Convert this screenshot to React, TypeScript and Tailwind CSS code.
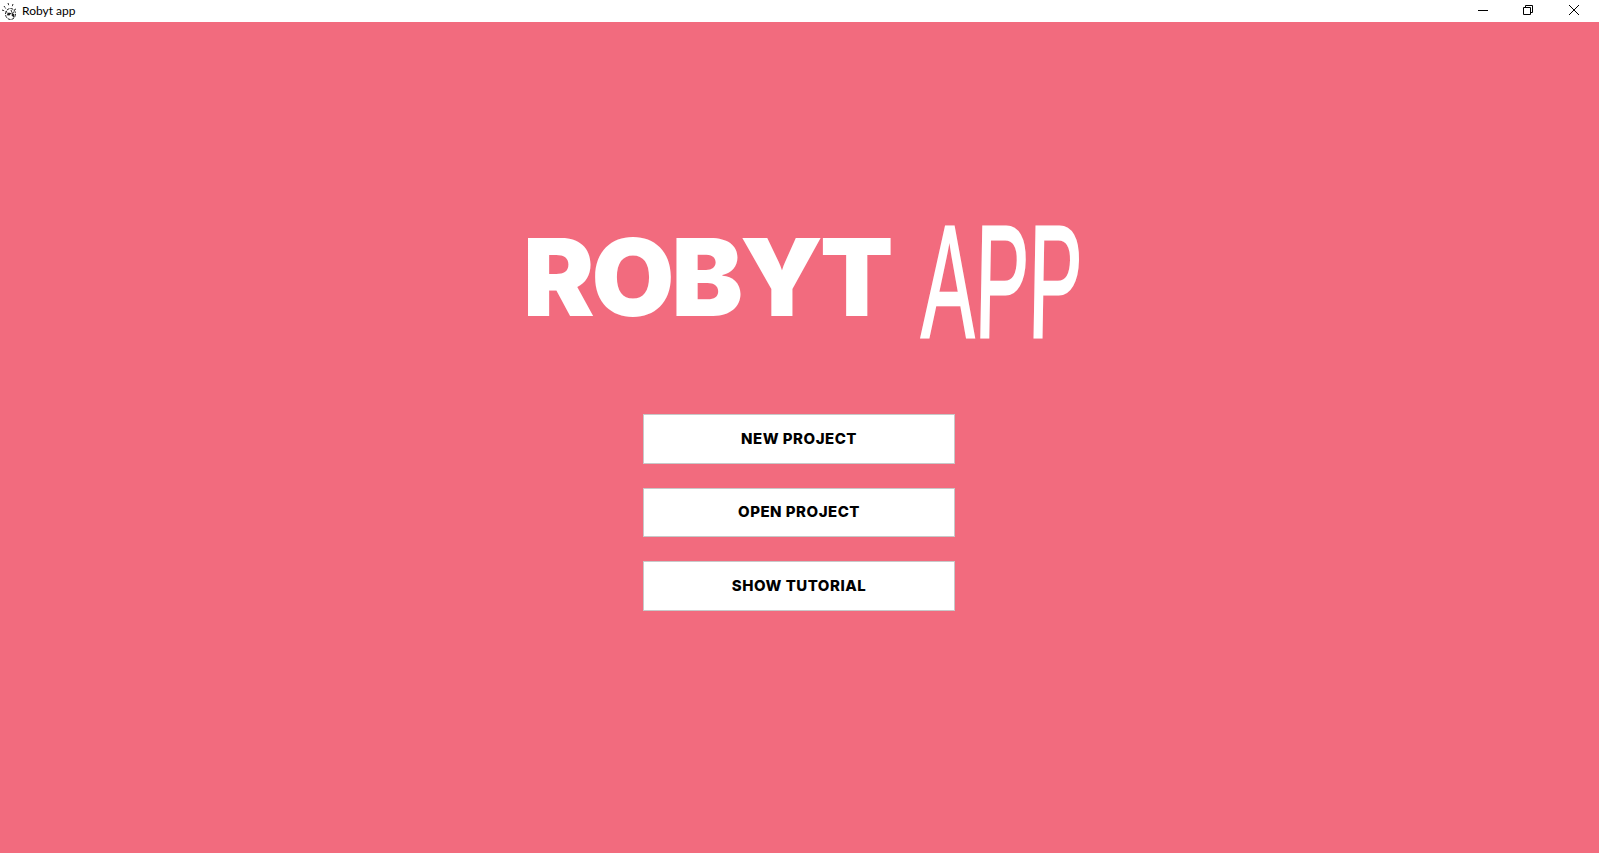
import React from "react";

const BUTTONS = ["NEW PROJECT", "OPEN PROJECT", "SHOW TUTORIAL"];

const AppIcon = () => (
  <svg width="15" height="19" viewBox="0 0 15 19" fill="none" stroke="#222" className="shrink-0">
    <ellipse cx="8.5" cy="12" rx="5" ry="5.5" strokeWidth="1" strokeDasharray="3 1" />
    <path d="M4 9l3 5M9 8l3 8M5 13l7-3M2 4l2 3M6 1l1 3M11 2l-1 3M0 8l3 1M14 7l-2 1" strokeWidth="1" strokeDasharray="2 1" />
    <path d="M6 11h2v2H6zM10 12h2v2h-2z" fill="#222" strokeWidth="0.5" />
  </svg>
);

const TitleBar = () => (
  <div className="h-[22px] bg-white flex items-center shrink-0">
    <div className="pl-[2px] pr-[5px] flex items-center">
      <AppIcon />
    </div>
    <span className="text-[12px] text-black font-['Lato','Open_Sans',sans-serif]">Robyt app</span>
    <div className="ml-auto flex items-center pr-[20px] pb-[3px] gap-[35px] h-full">
      <svg width="10" height="10" viewBox="0 0 10 10" stroke="#000" fill="none">
        <path d="M0 5.5h10" />
      </svg>
      <svg width="10" height="10" viewBox="0 0 10 10" stroke="#000" fill="none">
        <path d="M.5 2.5h7v7h-7zM2.5 2.5v-2h7v7h-2" />
      </svg>
      <svg width="10" height="10" viewBox="0 0 10 10" stroke="#000" fill="none" className="ml-[1px]">
        <path d="M0 0l10 10M10 0L0 10" />
      </svg>
    </div>
  </div>
);

export default function App() {
  return (
    <div className="h-[853px] w-full overflow-hidden flex flex-col bg-[#f26b7e]">
      <TitleBar />
      <main className="flex-1 flex flex-col items-center pt-[201px] pr-[1px]">
        <div className="h-[117px] w-[552px] flex items-center text-white">
          <span className="font-['Inter',sans-serif] font-black text-[107px] leading-none tracking-[-3px] -mt-[8px]">ROBYT</span>
          <span className="ml-[32px] w-[155px] whitespace-nowrap origin-left scale-x-[0.5] -skew-x-2 font-['Liberation_Sans',sans-serif] text-[160px] leading-none [-webkit-text-stroke:3px_white]">APP</span>
        </div>
        <div className="mt-[74px] flex flex-col gap-[24px]">
          {BUTTONS.map((label) => (
            <button
              key={label}
              className="w-[312px] h-[49.5px] bg-white border border-[#c8c8c8] text-black font-['Inter',sans-serif] font-extrabold text-[15px] tracking-[0.5px]"
            >
              {label}
            </button>
          ))}
        </div>
      </main>
    </div>
  );
}
